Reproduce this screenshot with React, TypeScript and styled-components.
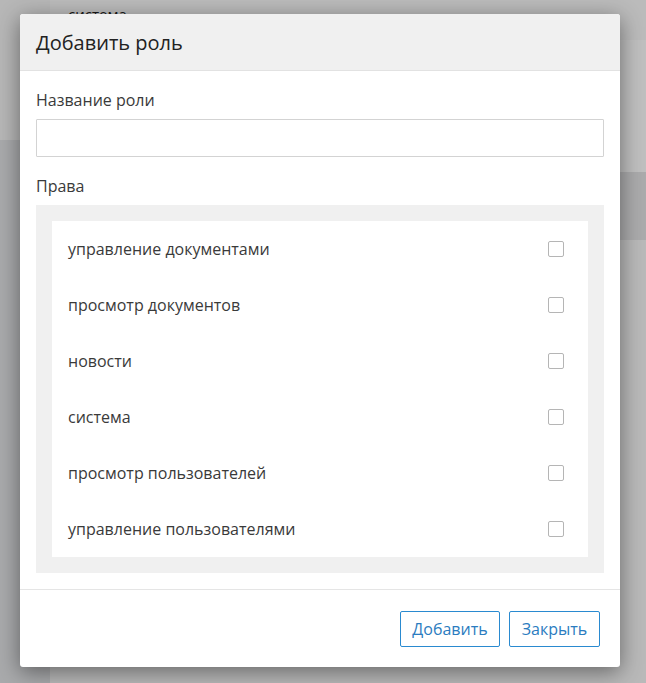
import React, {useState} from 'react';
import styled, {createGlobalStyle} from 'styled-components';

const GlobalStyle = createGlobalStyle`
    html, body {
        margin: 0;
        padding: 0;
        height: 100%;
    }
    body {
        font-family: 'Open Sans', 'Noto Sans', sans-serif;
        color: #333;
        overflow: hidden;
    }
    #root {
        height: 100%;
    }
`;

const Page = styled.div`
    position: relative;
    display: flex;
    height: 683px;
    background: #f2f2f2;
`;

const Sidebar = styled.div`
    width: 50px;
    flex-shrink: 0;
    display: flex;
    flex-direction: column;
    background: #e2e3e6;
`;

const SidebarTop = styled.div`
    height: 140px;
    background: #f4f4f5;
`;

const Main = styled.div`
    flex: 1;
    display: flex;
    flex-direction: column;
`;

const PageRow = styled.div<{$tone?: string; $height: number}>`
    height: ${p => p.$height}px;
    background: ${p => p.$tone || '#fff'};
    padding: 4px 18px;
    box-sizing: border-box;
    font-size: 15px;
    color: #222;
`;

const Overlay = styled.div`
    position: absolute;
    inset: 0;
    background: rgba(0, 0, 0, 0.25);
    display: flex;
    align-items: flex-start;
    padding: 14px 0 0 20px;
`;

const Modal = styled.div`
    width: 600px;
    background: #fff;
    border-radius: 3px;
    box-shadow: 0 5px 22px rgba(0, 0, 0, 0.45);
    display: flex;
    flex-direction: column;
    overflow: hidden;
`;

const ModalHeader = styled.div`
    height: 57px;
    box-sizing: border-box;
    background: #f0f0f0;
    border-bottom: 1px solid #e2e2e2;
    display: flex;
    align-items: center;
    padding: 0 16px;
`;

const Title = styled.h4`
    margin: 0;
    font-size: 20px;
    font-weight: 400;
    color: #222;
`;

const ModalBody = styled.div`
    padding: 18px 16px 16px;
    display: flex;
    flex-direction: column;
`;

const Label = styled.label`
    font-size: 16px;
    color: #3a3a3a;
    line-height: 22px;
    margin-bottom: 8px;
`;

const TextInput = styled.input`
    height: 38px;
    box-sizing: border-box;
    border: 1px solid #d3d3d3;
    border-radius: 1px;
    padding: 0 10px;
    font-size: 16px;
    font-family: inherit;
    outline: none;
    margin-bottom: 18px;
`;

const RightsBox = styled.div`
    background: #f0f0f0;
    padding: 16px;
`;

const RightsList = styled.div`
    background: #fff;
    display: flex;
    flex-direction: column;
`;

const RightRow = styled.label`
    height: 56px;
    display: flex;
    align-items: center;
    justify-content: space-between;
    padding: 0 24px 0 16px;
    font-size: 16px;
    color: #3a3a3a;
    cursor: pointer;
`;

const Check = styled.span<{$on: boolean}>`
    width: 14px;
    height: 14px;
    border: 1px solid #b5b5b5;
    border-radius: 2px;
    background: ${p => p.$on ? '#2a8ad0' : '#fff'};
`;

const ModalFooter = styled.div`
    border-top: 1px solid #e5e5e5;
    padding: 21px 20px 20px;
    display: flex;
    justify-content: flex-end;
    gap: 9px;
`;

const Button = styled.button<{$w: number}>`
    width: ${p => p.$w}px;
    height: 36px;
    background: #fff;
    border: 1px solid #2a8ad0;
    border-radius: 2px;
    color: #2b7cc0;
    font-family: inherit;
    font-size: 16px;
    cursor: pointer;
`;

const rights = [
    'управление документами',
    'просмотр документов',
    'новости',
    'система',
    'просмотр пользователей',
    'управление пользователями',
];

const App = () => {
    const [checked, setChecked] = useState<boolean[]>(rights.map(() => false));

    const toggle = (i: number) => {
        setChecked(checked.map((c, j) => (j === i ? !c : c)));
    };

    return (
        <>
            <GlobalStyle/>
            <Page>
                <Sidebar>
                    <SidebarTop/>
                </Sidebar>
                <Main>
                    <PageRow $height={40} $tone={'#fafafa'}>{'система'}</PageRow>
                    <PageRow $height={132}/>
                    <PageRow $height={68} $tone={'#e4e4e6'}/>
                    <PageRow $height={443} $tone={'#f7f7f7'}/>
                </Main>
                <Overlay>
                    <Modal>
                        <ModalHeader>
                            <Title>{'Добавить роль'}</Title>
                        </ModalHeader>
                        <ModalBody>
                            <Label>{'Название роли'}</Label>
                            <TextInput type='text'/>
                            <Label>{'Права'}</Label>
                            <RightsBox>
                                <RightsList>
                                    {rights.map((r, i) => (
                                        <RightRow
                                            key={r}
                                            onClick={() => toggle(i)}
                                        >
                                            {r}
                                            <Check $on={checked[i]}/>
                                        </RightRow>
                                    ))}
                                </RightsList>
                            </RightsBox>
                        </ModalBody>
                        <ModalFooter>
                            <Button $w={100}>{'Добавить'}</Button>
                            <Button $w={91}>{'Закрыть'}</Button>
                        </ModalFooter>
                    </Modal>
                </Overlay>
            </Page>
        </>
    );
};

export default App;
